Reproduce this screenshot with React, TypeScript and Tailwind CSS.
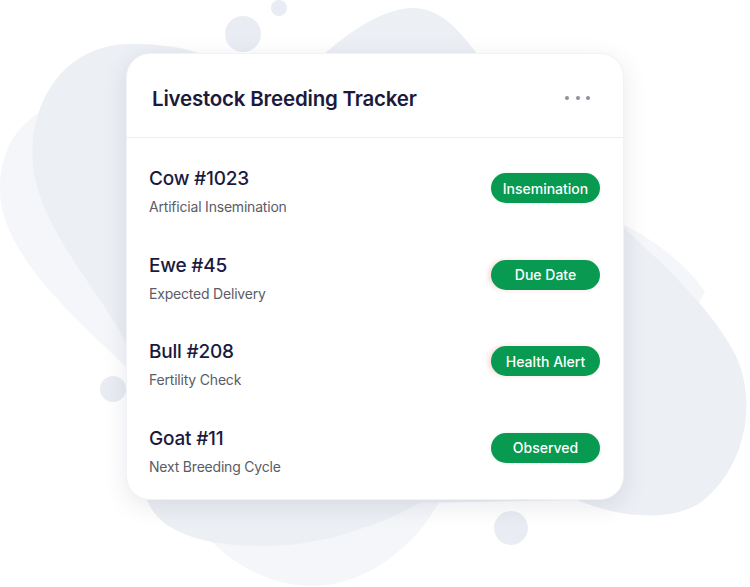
import React from "react";

const rows = [
  { name: "Cow #1023", note: "Artificial Insemination", tag: "Insemination", glow: false },
  { name: "Ewe #45", note: "Expected Delivery", tag: "Due Date", glow: true },
  { name: "Bull #208", note: "Fertility Check", tag: "Health Alert", glow: true },
  { name: "Goat #11", note: "Next Breeding Cycle", tag: "Observed", glow: false },
];

function Backdrop() {
  return (
    <svg
      className="absolute inset-0 pointer-events-none"
      width="750"
      height="587"
      viewBox="0 0 750 587"
    >
      {/* outer, lighter blob */}
      <path
        d="M 0 190 C 0 130, 40 100, 90 100 L 610 218 C 650 236, 685 262, 705 292 L 600 480 L 440 500 C 420 540, 370 586, 313 586 C 270 586, 235 565, 210 540 L 127 368 C 80 322, 0 255, 0 190 Z"
        fill="#f4f6f9"
      />
      {/* inner blob */}
      <path
        d="M 33 165 C 28 95, 70 44, 130 44 C 170 44, 195 50, 210 58 L 320 58 C 350 30, 385 8, 413 8 C 440 8, 460 30, 480 58 L 600 205 C 640 245, 700 292, 733 350 C 760 400, 745 470, 700 503 C 670 522, 620 518, 577 500 L 420 503 C 390 520, 330 545, 270 546 C 210 547, 160 535, 147 500 L 127 345 C 100 290, 40 230, 33 165 Z"
        fill="#eceff4"
      />
      <circle cx="243" cy="34" r="18" fill="#e9ecf2" />
      <circle cx="279" cy="8" r="8" fill="#e9ecf2" />
      <circle cx="113" cy="389" r="13" fill="#e9ecf2" />
      <circle cx="511" cy="528" r="17" fill="#e9ecf2" />
    </svg>
  );
}

export default function App() {
  return (
    <div
      className="relative w-[750px] h-[587px] overflow-hidden bg-white pt-[53px] pl-[126px]"
      style={{ fontFamily: "Inter, 'Liberation Sans', sans-serif" }}
    >
      <Backdrop />

      <div className="relative z-10 w-[498px] h-[447px] rounded-[24px] bg-white shadow-[0_6px_24px_rgba(30,40,70,0.10)] border border-[#f1f2f5]">
        {/* Header */}
        <div className="h-[84px] flex items-center justify-between pl-[25px] pr-[33px] border-b border-[#eceef2]">
          <h1 className="mt-[8px] text-[20.5px] font-semibold tracking-[-0.2px] text-[#1b1a3d]">
            Livestock Breeding Tracker
          </h1>
          <div className="mt-[4px] flex items-center gap-[6.5px]">
            <span className="w-[4px] h-[4px] rounded-full bg-[#8e929b]" />
            <span className="w-[4px] h-[4px] rounded-full bg-[#8e929b]" />
            <span className="w-[4px] h-[4px] rounded-full bg-[#8e929b]" />
          </div>
        </div>

        {/* Rows */}
        <div className="pt-[11px] pl-[22px] pr-[23px]">
          {rows.map((r) => (
            <div key={r.name} className="flex items-start justify-between py-[18.25px]">
              <div className="flex flex-col">
                <span className="text-[19px] leading-[24px] font-medium text-[#1b1a3d] tracking-[-0.2px]">
                  {r.name}
                </span>
                <span className="mt-[6px] text-[14px] leading-[20px] text-[#5b5c66] tracking-[-0.2px]">
                  {r.note}
                </span>
              </div>
              <span
                className={
                  r.glow
                    ? "mt-[6px] w-[109px] h-[30px] rounded-full bg-[#079a50] text-white text-[14px] font-medium flex items-center justify-center shadow-[-3px_0_4px_rgba(240,120,120,0.25)]"
                    : "mt-[6px] w-[109px] h-[30px] rounded-full bg-[#079a50] text-white text-[14px] font-medium flex items-center justify-center shadow-[0_0_3px_rgba(7,154,80,0.15)]"
                }
              >
                {r.tag}
              </span>
            </div>
          ))}
        </div>
      </div>
    </div>
  );
}
